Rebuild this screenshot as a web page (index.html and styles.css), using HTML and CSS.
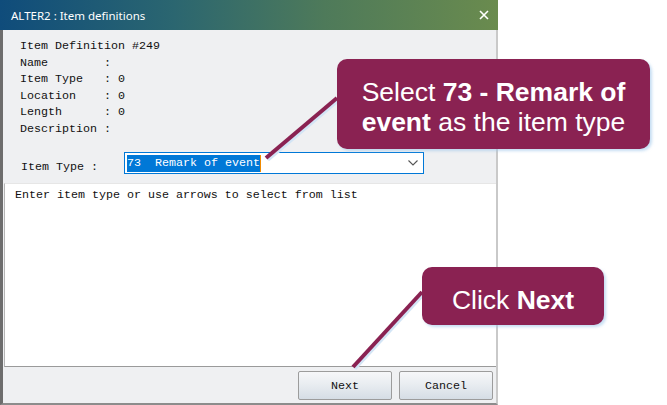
FILE: index.html
```html
<!DOCTYPE html>
<html lang="en">
<head>
    <meta charset="UTF-8">
    <meta name="viewport" content="width=device-width, initial-scale=1.0">
    <title>ALTER2 : Item definitions</title>
    <link rel="stylesheet" href="styles.css">
</head>
<body>
    <div class="page">
        <div class="window">
            <div class="titlebar">
                <span class="title">ALTER2 : Item definitions</span>
                <svg class="close" width="10" height="10" viewBox="0 0 10 10">
                    <path d="M1 1 L9 9 M9 1 L1 9" stroke="#fff" stroke-width="1.6" fill="none"/>
                </svg>
            </div>
            <div class="frame">
                <pre class="info">Item Definition #249
Name        :
Item Type   : 0
Location    : 0
Length      : 0
Description :</pre>

                <div class="type-row">
                    <span class="type-label">Item Type :</span>
                    <div class="combo">
                        <span class="combo-value">73  Remark of event</span><span class="caret"></span>
                        <svg class="chevron" width="10" height="6" viewBox="0 0 10 6">
                            <path d="M0.5 0.5 L5 5 L9.5 0.5" stroke="#555" stroke-width="1.1" fill="none"/>
                        </svg>
                    </div>
                </div>

                <div class="message">Enter item type or use arrows to select from list</div>

                <div class="buttons">
                    <button class="btn">Next</button>
                    <button class="btn">Cancel</button>
                </div>
            </div>
        </div>

        <!-- callout pointers -->
        <svg class="pointers" width="667" height="405" viewBox="0 0 667 405">
            <line x1="339" y1="100" x2="268" y2="160" stroke="#d3e5f6" stroke-width="3"/>
            <line x1="337" y1="98" x2="266" y2="158" stroke="#8a2252" stroke-width="4"/>
            <line x1="424" y1="294" x2="355" y2="369" stroke="#d3e5f6" stroke-width="3"/>
            <line x1="422" y1="292" x2="353" y2="367" stroke="#8a2252" stroke-width="4"/>
        </svg>

        <div class="callout callout-type">
            Select <b>73 - Remark of</b><br><b>event</b> as the item type
        </div>
        <div class="callout callout-next">
            Click <b>Next</b>
        </div>
    </div>
</body>
</html>
```

FILE: styles.css
```css
body {
    margin: 0;
    background-color: white;
}
.page {
    position: relative;
    width: 667px;
    height: 405px;
    overflow: hidden;
}
.window {
    width: 498px;
    height: 405px;
    display: flex;
    flex-direction: column;
}
.titlebar {
    height: 30px;
    display: flex;
    align-items: center;
    justify-content: space-between;
    padding: 0 9px 0 11px;
    background: linear-gradient(to right, #0f4c7b 0%, #2b6670 35%, #4e7a5a 65%, #6a8b4e 100%);
    color: white;
    font-family: "Noto Sans", "Open Sans", sans-serif;
    font-size: 11.5px;
}
.close {
    display: block;
}
.frame {
    flex: 1;
    display: flex;
    flex-direction: column;
    background-color: #eff0f2;
    border-left: 3px solid #6d6d6d;
    border-right: 2px solid #c9c9c9;
    border-bottom: 2px solid #8c8c8c;
    font-family: "Liberation Mono", "Courier New", monospace;
    font-size: 11.67px;
    color: #111;
}
.info {
    margin: 0;
    padding: 8px 0 0 17px;
    font-family: inherit;
    font-size: inherit;
    line-height: 16.5px;
}
.type-row {
    display: flex;
    align-items: center;
    margin-top: 15px;
    padding-left: 18px;
}
.type-label {
    width: 103px;
    white-space: pre;
    padding-top: 8px;
}
.combo {
    box-sizing: border-box;
    width: 300px;
    height: 22px;
    border: 1px solid #0078d7;
    background-color: white;
    display: flex;
    align-items: center;
    padding-left: 2px;
    position: relative;
}
.combo-value {
    background-color: #0078d7;
    color: white;
    white-space: pre;
    line-height: 17px;
}
.caret {
    width: 1px;
    height: 17px;
    background-color: #f08a00;
}
.chevron {
    position: absolute;
    right: 5px;
    top: 7px;
}
.message {
    flex: 1;
    margin: 9px 0 0 1px;
    padding: 3px 0 0 10px;
    background-color: white;
    border-left: 1px solid #b5b5b5;
    border-top: 1px solid #e6e6e6;
    border-bottom: 1px solid #9a9a9a;
    line-height: 16.5px;
}
.buttons {
    height: 36px;
    display: flex;
    justify-content: flex-end;
    gap: 7px;
    padding: 4px 3px 0 0;
    box-sizing: border-box;
}
.btn {
    width: 94px;
    height: 29px;
    border: 1px solid #9c9c9c;
    border-radius: 2px;
    background: linear-gradient(#f6f7f9, #e9edf1 45%, #d5dde5);
    font-family: "Liberation Mono", "Courier New", monospace;
    font-size: 11.67px;
    color: #111;
    padding: 0;
}
.pointers {
    position: absolute;
    top: 0;
    left: 0;
}
.callout {
    position: absolute;
    box-sizing: border-box;
    background-color: #8a2252;
    border-radius: 10px;
    box-shadow: 2px 2px 3px rgba(160, 200, 235, 0.6);
    color: white;
    font-family: "Liberation Sans", Arial, sans-serif;
    font-size: 26.5px;
    line-height: 29.5px;
    text-align: center;
    padding-top: 19px;
}
.callout-type {
    left: 337px;
    top: 59px;
    width: 313px;
    height: 90px;
}
.callout-next {
    left: 422px;
    top: 267px;
    width: 182px;
    height: 58px;
}
```
